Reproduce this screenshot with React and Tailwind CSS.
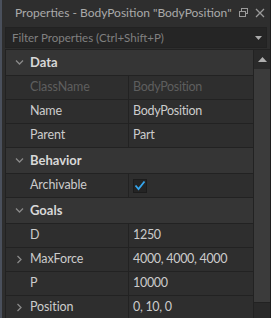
import React from "react";

const Chevron = ({ open }) => (
  <svg width="9" height="9" viewBox="0 0 9 9" className="shrink-0">
    {open ? (
      <path d="M1 2.5 L4.5 6 L8 2.5" stroke="#8a8a8a" strokeWidth="1.3" fill="none" />
    ) : (
      <path d="M2.5 1 L6 4.5 L2.5 8" stroke="#8a8a8a" strokeWidth="1.3" fill="none" />
    )}
  </svg>
);

const Header = ({ label }) => (
  <div className="flex h-[26px] items-center border-b border-[#222222] bg-[#353535]">
    <div className="flex w-[24px] justify-center pl-[3px]">
      <Chevron open />
    </div>
    <span className="text-[13px] font-bold text-[#d8d8d8]">{label}</span>
  </div>
);

const Row = ({ name, value, dim, expand, check }) => (
  <div className="flex h-[24px] items-center border-b border-[#222222] bg-[#2e2e2e]">
    <div className="flex w-[24px] justify-center pl-[3px]">{expand ? <Chevron /> : null}</div>
    <div className={`w-[98px] whitespace-nowrap text-[12.5px] tracking-[-0.1px] ${dim ? "text-[#5e5e5e]" : "text-[#cccccc]"}`}>{name}</div>
    <div className="h-full w-px bg-[#222222]" />
    <div className={`flex-1 whitespace-nowrap pl-[4px] text-[12.5px] tracking-[-0.3px] ${dim ? "text-[#5e5e5e]" : "text-[#cccccc]"}`}>
      {check ? (
        <div className="flex h-[14px] w-[14px] items-center justify-center border border-[#1c1c1c] bg-[#242424]">
          <svg width="12" height="11" viewBox="0 0 12 11">
            <path d="M1.5 5.5 L4.5 9 L10.5 1.5" stroke="#35a6ee" strokeWidth="1.8" fill="none" />
          </svg>
        </div>
      ) : (
        value
      )}
    </div>
  </div>
);

export default function App() {
  return (
    <div
      className="flex h-[318px] w-[271px] flex-col overflow-hidden bg-[#2e2e2e]"
      style={{ fontFamily: 'Lato, "Noto Sans", sans-serif' }}
    >
      <div className="flex h-full">
        <div className="w-[2px] bg-[#4a505c]" />
        <div className="flex min-w-0 flex-1 flex-col">
          <div className="flex h-[25px] shrink-0 items-center pl-[13px] pr-[5px]">
            <span className="flex-1 whitespace-nowrap text-[12px] text-[#aaaaaa]">Properties - BodyPosition "BodyPosition"</span>
            <svg width="11" height="11" viewBox="0 0 11 11" className="mr-[6px] shrink-0">
              <rect x="3.5" y="1.5" width="6" height="5" stroke="#9a9a9a" fill="none" />
              <rect x="1.5" y="4.5" width="6" height="5" stroke="#9a9a9a" fill="#2e2e2e" />
            </svg>
            <svg width="10" height="10" viewBox="0 0 10 10" className="shrink-0">
              <path d="M1 1 L9 9 M9 1 L1 9" stroke="#9a9a9a" strokeWidth="1.3" />
            </svg>
          </div>
          <div className="mx-[3px] mt-[2px] flex h-[21px] shrink-0 items-center border border-[#222222] bg-[#252525] pl-[6px] pr-[4px]">
            <span className="flex-1 whitespace-nowrap text-[11.5px] text-[#808080]">Filter Properties (Ctrl+Shift+P)</span>
            <svg width="7" height="4" viewBox="0 0 7 4">
              <path d="M0 0 L7 0 L3.5 4 Z" fill="#aaaaaa" />
            </svg>
          </div>
          <div className="ml-[3px] mt-[1px] flex flex-1 border-l border-t border-[#222222]">
            <div className="flex flex-1 flex-col">
              <Header label="Data" />
              <Row name="ClassName" value="BodyPosition" dim />
              <Row name="Name" value="BodyPosition" />
              <Row name="Parent" value="Part" />
              <Header label="Behavior" />
              <Row name="Archivable" check />
              <Header label="Goals" />
              <Row name="D" value="1250" />
              <Row name="MaxForce" value="4000, 4000, 4000" expand />
              <Row name="P" value="10000" />
              <Row name="Position" value="0, 10, 0" expand />
            </div>
            <div className="flex w-[17px] flex-col border-l border-[#222222] bg-[#2a2a2a]">
              <div className="flex h-[19px] items-center justify-center">
                <svg width="9" height="5" viewBox="0 0 9 5">
                  <path d="M0 5 L9 5 L4.5 0 Z" fill="#b0b0b0" />
                </svg>
              </div>
              <div className="h-[233px] bg-[#3b3b3b]" />
              <div className="flex-1 border-t border-[#222222]" />
            </div>
          </div>
        </div>
        <div className="w-px bg-[#1e1e1e]" />
      </div>
    </div>
  );
}
